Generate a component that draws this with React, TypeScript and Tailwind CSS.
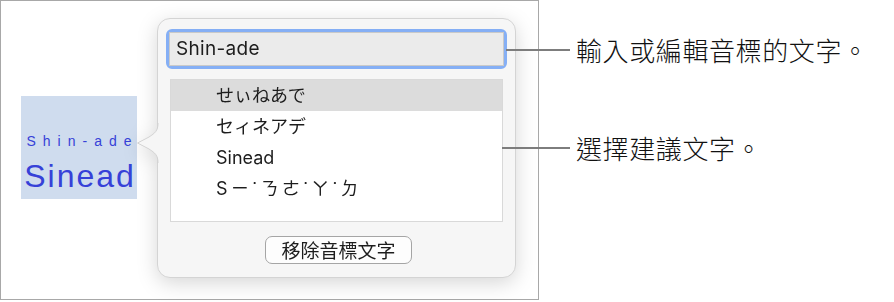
import React from "react";

const cjk = { fontFamily: '"Noto Sans CJK TC", "Noto Sans CJK JP", sans-serif' };
const ui = { fontFamily: 'Inter, "Noto Sans CJK TC", "Noto Sans CJK JP", sans-serif' };
const helv = { fontFamily: '"Liberation Sans", Arial, sans-serif' };

const rows = ["せぃねあで", "セィネアデ", "Sinead", "Sㄧ˙ㄋㄜ˙ㄚ˙ㄉ"];

export default function App() {
  return (
    <div className="relative w-[894px] h-[302px] bg-white overflow-hidden">
      {/* framed document area */}
      <div className="w-[539px] h-[300px] border-[1.5px] border-[#a8a8a8] flex items-start">
        {/* selected ruby text */}
        <div className="ml-[20px] mt-[95px] w-[116px] h-[103px] bg-[#cfdcee] flex flex-col items-center pt-[37px] whitespace-nowrap" style={helv}>
          <div className="text-[14px] leading-[16px] tracking-[7px] pl-[7px] text-[#3641d8]">Shin-ade</div>
          <div className="text-[32px] leading-[34px] tracking-[2px] pl-[2px] mt-[10px] text-[#3641d8]">Sinead</div>
        </div>

        {/* popover */}
        <div className="relative ml-[20px] mt-[17px] drop-shadow-[0_5px_10px_rgba(0,0,0,0.16)]">
          <svg className="absolute left-[-21px] top-[105px]" width="23" height="40" viewBox="0 0 23 40">
            <path d="M22 0 C22 8 19 10 13 14 L1.5 20 L13 26 C19 30 22 32 22 40 L23 40 L23 0 Z" fill="#f6f6f6" />
            <path d="M22 0 C22 8 19 10 13 14 L1.5 20 L13 26 C19 30 22 32 22 40" fill="none" stroke="#d2d2d2" strokeWidth="1" />
          </svg>
          <div className="w-[359px] h-[260px] rounded-[13px] border border-[#d4d4d4] bg-[#f6f6f6] flex flex-col px-[8px] pt-[10px] pb-[12px]">
            {/* input */}
            <div className="h-[40px] rounded-[6px] border-[3px] border-[#85aff5] bg-[#ebebeb] flex items-center">
              <div className="w-full h-full border border-[#c9c9c9] flex items-center pl-[6px] text-[19px] text-[#1d1d1d] tracking-[0.3px]" style={ui}>
                Shin-ade
              </div>
            </div>
            {/* list */}
            <div className="mx-[4px] mt-[10px] h-[143px] border border-[#d9d9d9] bg-white flex flex-col">
              {rows.map((r, i) => (
                <div
                  key={r}
                  className={
                    "h-[31px] flex items-center pl-[45px] text-[18px] text-[#1d1d1d] whitespace-nowrap " +
                    (i === 0 ? "bg-[#dcdcdc]" : "") +
                    (i === 3 ? " tracking-[3.5px]" : "")
                  }
                  style={ui}
                >
                  {r}
                </div>
              ))}
            </div>
            {/* button */}
            <div className="flex justify-center mt-[14px] pl-[4px]">
              <div className="w-[147px] h-[28px] rounded-[7px] border border-[#a5a5a5] bg-[#fdfdfd] flex items-center justify-center text-[19px] text-[#1d1d1d]" style={cjk}>
                移除音標文字
              </div>
            </div>
          </div>
        </div>
      </div>

      {/* callouts */}
      <div className="absolute left-[506px] top-[49px] w-[64px] h-[2px] bg-[#7d7d7d]" />
      <div className="absolute left-[576px] top-[32px] text-[26px] leading-[36px] font-light text-[#111111] tracking-[0.6px] whitespace-nowrap" style={cjk}>
        輸入或編輯音標的文字。
      </div>
      <div className="absolute left-[502px] top-[147px] w-[68px] h-[2px] bg-[#7d7d7d]" />
      <div className="absolute left-[576px] top-[130px] text-[26px] leading-[36px] font-light text-[#111111] tracking-[0.6px] whitespace-nowrap" style={cjk}>
        選擇建議文字。
      </div>
    </div>
  );
}
